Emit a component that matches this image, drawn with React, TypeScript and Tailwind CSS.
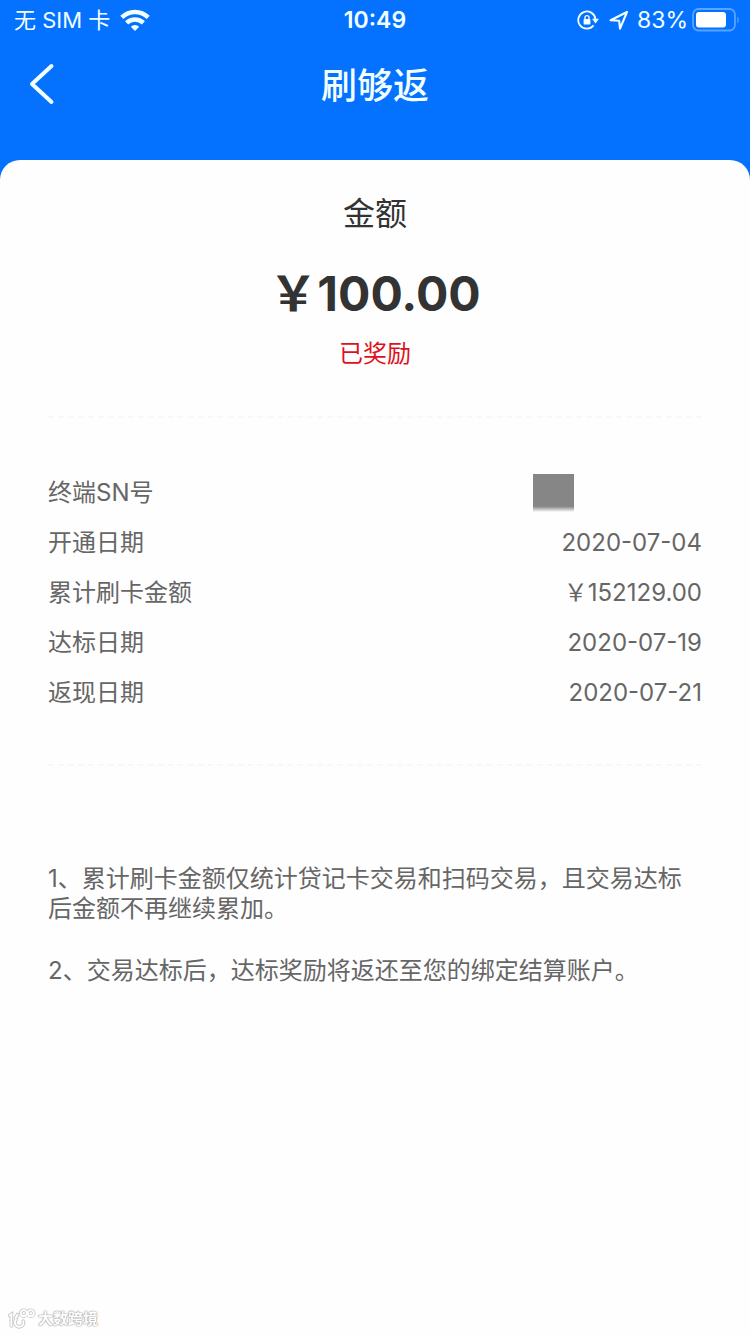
import React from "react";

// Full-width yen sign, takes up a whole character cell
const YEN = "\uffe5";

const DETAILS = [
  { label: "终端SN号", value: null },
  { label: "开通日期", value: "2020-07-04" },
  { label: "累计刷卡金额", value: `${YEN}152129.00` },
  { label: "达标日期", value: "2020-07-19" },
  { label: "返现日期", value: "2020-07-21" },
];

const NOTES = [
  "1、累计刷卡金额仅统计贷记卡交易和扫码交易，且交易达标后金额不再继续累加。",
  "2、交易达标后，达标奖励将返还至您的绑定结算账户。",
];

const WifiIcon = () => (
  <svg viewBox="0 0 30 22" className="h-[22px] w-[30px]" fill="none" stroke="currentColor" strokeWidth="4.4">
    <path d="M1.8 8.4a18.8 18.8 0 0 1 26.4 0" />
    <path d="M6.6 13.9a12 12 0 0 1 16.8 0" />
    <path d="M15 22l-4.2-4.2a6 6 0 0 1 8.4 0z" fill="currentColor" stroke="none" />
  </svg>
);

const RotationLockIcon = () => (
  <svg viewBox="0 0 22 20" className="h-5 w-[22px]" fill="none" stroke="currentColor" strokeWidth="1.8">
    <path d="M16.6 15.4a8.6 8.6 0 1 1 1.8-6.4" />
    <path d="M15 8.8h7l-3.5 4.6z" fill="currentColor" stroke="none" />
    <rect x="6.6" y="9" width="6.8" height="5.6" rx="0.8" fill="currentColor" stroke="none" />
    <path d="M8 9.4V7.6a2 2 0 0 1 4 0v1.8" strokeWidth="1.4" />
  </svg>
);

const LocationIcon = () => (
  <svg viewBox="0 0 20 20" className="h-5 w-5" fill="none" stroke="currentColor" strokeWidth="2.1" strokeLinejoin="round">
    <path d="M18 2L1.6 10.2l8.6.6.8 7.8z" />
  </svg>
);

const BatteryIcon = () => (
  <svg viewBox="0 0 48 24" className="h-6 w-12" fill="none">
    <rect x="1" y="1" width="42" height="21.5" rx="5.5" stroke="#58a4ff" strokeWidth="1.8" />
    <rect x="4" y="4" width="30" height="15.5" rx="3" fill="#fff" />
    <path d="M45.4 8.4c1.8.8 1.8 6 0 6.8z" fill="#58a4ff" />
  </svg>
);

const StatusBar = () => (
  <div className="grid h-10 grid-cols-[1fr_auto_1fr] items-center text-[23px] leading-none">
    <div className="flex items-center gap-2.5 pl-3.5">
      <span className="text-[22px]">无 SIM 卡</span>
      <WifiIcon />
    </div>
    <span className="font-semibold">10:49</span>
    <div className="flex items-center justify-end pr-2.5">
      <RotationLockIcon />
      <span className="ml-2.5 mr-2 flex">
        <LocationIcon />
      </span>
      <span className="mr-1">83%</span>
      <BatteryIcon />
    </div>
  </div>
);

const NavBar = () => (
  <header className="grid h-[88px] grid-cols-[1fr_auto_1fr] items-center">
    <button type="button" aria-label="返回" className="w-fit pl-7">
      <svg viewBox="0 0 28 44" className="h-11 w-7" fill="none" stroke="currentColor" strokeWidth="4" strokeLinecap="round" strokeLinejoin="round">
        <path d="M23.5 4L4 22l19.5 18" />
      </svg>
    </button>
    <h1 className="pt-1 text-4xl font-medium">刷够返</h1>
  </header>
);

const Watermark = () => (
  <footer className="mt-auto flex items-center gap-0.5 pb-1 pl-2">
    <svg viewBox="0 0 28 22" className="h-[22px] w-7" fill="none" strokeLinecap="round">
      <g stroke="#c8c8c8" strokeWidth="3.6">
        <path d="M1.6 7.6L3.4 6.4V18M9.6 6.5L7.4 10.4" />
        <path d="M8.2 11.6a4.2 4.2 0 1 0 7 1.6" />
        <circle cx="15.8" cy="5.2" r="3" />
        <circle cx="22.8" cy="5.2" r="3" />
      </g>
      <g stroke="#fff" strokeWidth="1.8">
        <path d="M1.6 7.6L3.4 6.4V18M9.6 6.5L7.4 10.4" />
        <path d="M8.2 11.6a4.2 4.2 0 1 0 7 1.6" />
        <circle cx="15.8" cy="5.2" r="3" />
        <circle cx="22.8" cy="5.2" r="3" />
      </g>
    </svg>
    <span className="text-[15px] leading-5 font-bold text-white [text-shadow:0_0_1px_#999,0_0_1px_#999,0_0_2px_#bbb]">
      大数跨境
    </span>
  </footer>
);

const App = () => {
  return (
    <div className="flex min-h-screen flex-col bg-[#0571ff] font-['Inter','Noto_Sans_CJK_SC',sans-serif]">
      <div className="pb-8 text-[#f2ffff]">
        <StatusBar />
        <NavBar />
      </div>

      <main className="flex grow flex-col rounded-t-[20px] bg-[#fefefe]">
        <div className="px-12">
          {/* Amount */}
          <section className="flex flex-col items-center border-b-2 border-dashed border-[#f8f8f8] pt-8 pb-12 text-[#333]">
            <h2 className="text-[32px] leading-[44px]">金额</h2>
            <p className="mt-7 text-5xl leading-[60px] font-bold">{YEN}100.00</p>
            <p className="mt-4 text-2xl leading-7 text-[#e01020]">已奖励</p>
          </section>

          {/* Details */}
          <dl className="border-b-2 border-dashed border-[#f8f8f8] pt-[50px] pb-[46px] text-2xl text-[#666]">
            {DETAILS.map(({ label, value }) => (
              <div key={label} className="flex h-[50px] items-center justify-between">
                <dt>{label}</dt>
                {value ? (
                  <dd>{value}</dd>
                ) : (
                  <dd className="mr-32 h-[38px] w-[41px] bg-linear-to-b from-[#868686] from-85% to-[#fefefe]" />
                )}
              </div>
            ))}
          </dl>

          {/* Notes */}
          <section className="flex flex-col gap-8 pt-[98px] text-2xl leading-[30px] text-[#666]">
            {NOTES.map((note) => (
              <p key={note}>{note}</p>
            ))}
          </section>
        </div>

        <Watermark />
      </main>
    </div>
  );
};

export default App;
